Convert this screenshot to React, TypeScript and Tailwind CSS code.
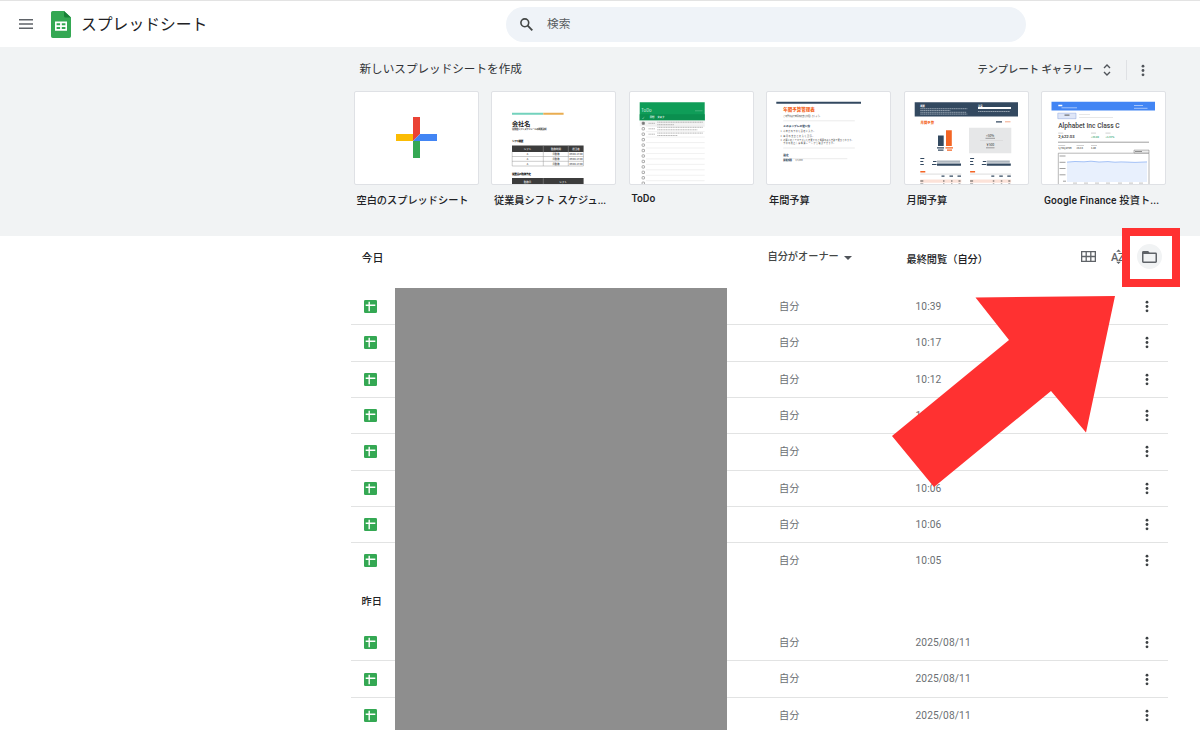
import type { ReactNode } from "react";

const DOC_ROWS_TODAY = ["10:39", "10:17", "10:12", "10:11", "10:07", "10:06", "10:06", "10:05"];
const DOC_ROWS_YESTERDAY = ["2025/08/11", "2025/08/11", "2025/08/11"];

function MoreIcon({ className }: { className?: string }) {
  return (
    <svg viewBox="0 0 4 14" className={className} fill="currentColor">
      <circle cx="2" cy="2.3" r="1.5" />
      <circle cx="2" cy="7" r="1.5" />
      <circle cx="2" cy="11.7" r="1.5" />
    </svg>
  );
}

function SheetsLogo() {
  return (
    <svg viewBox="0 0 20 27" className="h-[27px] w-5">
      <path d="M1.800 0H13l7 6.600v18.600a1.800 1.800 0 0 1-1.800 1.800H1.800A1.800 1.800 0 0 1 0 25.200V1.800A1.800 1.800 0 0 1 1.800 0z" fill="#34a853" />
      <path d="M13 0l7 6.600h-5.400A1.600 1.600 0 0 1 13 5z" fill="#188038" />
      <path d="M4 10.500h12v9.300H4zM5.600 12.200v2h3.500v-2zM10.800 12.200v2h3.600v-2zM5.600 16v2.100h3.500V16zM10.800 16v2.100h3.600V16z" fill="#fff" fillRule="evenodd" />
    </svg>
  );
}

function SheetIcon() {
  return (
    <svg viewBox="0 0 13 13" className="size-[13px]">
      <rect width="13" height="13" rx="1.3" fill="#34a853" />
      <path d="M4.500 1.800h1.400v2.800h5.400V6H5.900v5.200H4.500V6H1.700V4.600h2.800z" fill="#fff" />
    </svg>
  );
}

function BlankThumb() {
  return (
    <svg viewBox="0 0 41 41" className="size-[41px]">
      <path d="M17 0h7v17l-7 7z" fill="#ea4335" />
      <path d="M0 17h17v7H0z" fill="#fbbc04" />
      <path d="M17 24h7v17h-7z" fill="#34a853" />
      <path d="M24 17h17v7H17z" fill="#4285f4" />
    </svg>
  );
}

function Thumb({ children }: { children: ReactNode }) {
  return (
    <svg viewBox="1 0.5 123 91.5" className="h-full w-full" fontFamily="'Noto Sans CJK JP', sans-serif">
      {children}
    </svg>
  );
}

function ShiftThumb() {
  return (
    <Thumb>
      <path d="M21 21.200h31.300v2H21z" fill="#73d2bd" />
      <path d="M52.300 21.200h20.300v2H52.300z" fill="#e9ad51" />
      <text x="21" y="34.600" fontSize="6.100" fontWeight="700" fill="#222">会社名</text>
      <text x="21" y="38.300" fontSize="2.300" fontWeight="700" fill="#444" textLength="34.500">従業員シフト スケジュールの概要説明</text>
      <text x="21" y="50.600" fontSize="2.700" fontWeight="900" fill="#111" textLength="11.500">シフト概要</text>
      <path d="M21 54h71.600v6.400H21zM21 86.600h71.600V93H21z" fill="#3c3c3c" />
      <path d="M21.200 60v14.500h71.200V60M21 65h71.600M21 69.800h71.600M52.300 54v20.500M77.300 54v20.500M52.300 86.600V93" fill="none" stroke="#9a9a9a" strokeWidth=".5" />
      <g fontSize="2.500" fontWeight="700" textAnchor="middle" fill="#ddd">
        <text x="36.500" y="58.200">シフト</text>
        <text x="65" y="58.200">勤務時間</text>
        <text x="85" y="58.200">担当者</text>
        <text x="36.500" y="91">勤務日</text>
        <text x="72" y="91">シフト</text>
      </g>
      <g fontSize="2.300" fontWeight="700" textAnchor="middle" fill="#555">
        {[63.4, 68.2, 73].map((y) => (
          <g key={y}>
            <text x="36.500" y={y}>A</text>
            <text x="65" y={y}>日勤務</text>
            <text x="85" y={y}>09:00-17:00</text>
          </g>
        ))}
      </g>
      <text x="21" y="83.300" fontSize="2.700" fontWeight="900" fill="#111" textLength="19">従業員の勤務予定</text>
    </Thumb>
  );
}

function TodoThumb() {
  return (
    <Thumb>
      <path d="M10.700 10.700h65V29h-65z" fill="#0f9d58" />
      <path d="M10.700 22.700h65V29h-65z" fill="#0b8f4f" />
      <text x="12.300" y="20.300" fontSize="4.300" fill="#d5f2e1">ToDo</text>
      <path d="M66 19.300h7.500" stroke="#5dbd8c" strokeWidth=".7" />
      <text x="13.200" y="27" fontSize="3" fill="#fff">✓</text>
      <text x="20.700" y="26.900" fontSize="2.400" fontWeight="700" fill="#fff">日付</text>
      <text x="28.200" y="26.900" fontSize="2.400" fontWeight="700" fill="#fff">タスク</text>
      <path d="M10.700 29h65v5.700h-65z" fill="#f3f3f3" />
      {Array.from({ length: 12 }, (_, i) => (
        <g key={i} transform={`translate(0 ${i * 5.45})`}>
          <rect x="13.100" y="30.600" width="2.400" height="2.400" rx=".5" fill={i === 0 ? "#777" : "#fff"} stroke="#888" strokeWidth=".7" />
          <path d="M17 34.700h58.700" stroke="#e2e2e2" strokeWidth=".5" />
        </g>
      ))}
      <g stroke="#888" strokeWidth=".9" strokeDasharray="1.300 .4" opacity=".65">
        <path d="M19.500 31.800h6.500M19.500 37.300h6.500M19.500 42.700h6.500" />
        <path d="M28.300 30.700H74M28.300 33.200h17M28.300 35.800H74M28.300 38.300h40M28.300 41.600H74M28.300 44h20" />
      </g>
    </Thumb>
  );
}

function AnnualThumb() {
  return (
    <Thumb>
      <path d="M10.300 10.300H95v2H10.300z" fill="#334960" />
      <text x="17.300" y="19.800" fontSize="4.500" fontWeight="900" fill="#f46524">年間予算管理表</text>
      <text x="17.300" y="25" fontSize="2.100" fill="#444" textLength="38">この予算表で年間の収支を管理しましょう。</text>
      <path d="M17.300 29.300h71.500M17.300 56.500h71.500M17.300 67.200h64" stroke="#ddd" strokeWidth=".6" />
      <text x="17.300" y="35.800" fontSize="2.700" fontWeight="900" fill="#334960" textLength="27">このテンプレの使い方</text>
      <g fontSize="2" fill="#444">
        <text x="14.500" y="40.600">1.</text>
        <text x="17.300" y="40.600" textLength="32">今年度の予算を設定に入力。</text>
        <text x="14.500" y="45.200">2.</text>
        <text x="17.300" y="45.200" textLength="31">毎月の支出と収入を記録。</text>
        <text x="14.500" y="49.700">3.</text>
        <text x="17.300" y="49.500" textLength="70">必要に応じてカテゴリを変更すると概要の表も自動で更新されます。</text>
        <text x="17.300" y="52" textLength="52">予算の見直しは概要シートから確認できます。</text>
      </g>
      <text x="17.300" y="64.400" fontSize="2.600" fontWeight="900" fill="#334960">設定</text>
      <text x="17.300" y="69.400" fontSize="2.200" fontWeight="900" fill="#334960">開始残高</text>
      <text x="29" y="69.400" fontSize="2.200" fill="#555">￥5,000</text>
    </Thumb>
  );
}

function MonthlyThumb() {
  return (
    <Thumb>
      <path d="M10.700 10.700H114V25H10.700z" fill="#334960" />
      <g fontSize="2.300" fontWeight="700" fill="#fff">
        <text x="16.300" y="15">概要</text>
        <text x="74" y="15">注意</text>
      </g>
      <path d="M16.300 17.200h47M16.300 19h30M16.300 20.800h46M16.300 22.600h47M74 20h32" stroke="#b8c2cc" strokeWidth=".7" strokeDasharray="1.500 .35" />
      <path d="M74 15.600h33v1.900H74z" fill="#fff" />
      <text x="16.600" y="32.300" fontSize="3.400" fontWeight="900" fill="#f46524">月間予算</text>
      <path d="M92 30.300h6" stroke="#334960" strokeWidth="1.300" />
      <path d="M101 30.300h5.500" stroke="#f3a98a" strokeWidth="1" />
      <path d="M34 44h5.700v10.400H34z" fill="#334960" />
      <path d="M42 38.700h5.800v15.700H42z" fill="#f46524" />
      <path d="M33 56.300h7M34 58.600h5.500" stroke="#334960" strokeWidth="1.300" />
      <path d="M41.500 56.300h7.500M43 58.600h5" stroke="#f46524" strokeWidth="1.300" />
      <path d="M65 36.300h42.300v25.500H65z" fill="#e6e7e8" />
      <path d="M76 49h23" stroke="#ccc" strokeWidth=".4" />
      <g fontSize="3.100" textAnchor="middle" fill="#333">
        <text x="86" y="45">+50%</text>
        <text x="86" y="54">￥500</text>
      </g>
      <path d="M81.500 46.800h9.500M82 56.300h8.500" stroke="#888" strokeWidth=".8" />
      {[0, 49.8].map((dx) => (
        <g key={dx} transform={`translate(${dx} 0)`}>
          <path d="M16.300 67h4M16.300 70h3M16.300 73h3.500M29 70h3.500M28 73h4.500" stroke="#334960" strokeWidth="1.100" />
          <path d="M33 69h23v2.200H33z" fill="#aeb6be" />
          <path d="M33 72h24v2.300H33z" fill="#334960" />
          <path d="M16.300 80.300h5" stroke="#f46524" strokeWidth="1.500" />
          <path d="M16.300 82.600h41" stroke="#aaa" strokeWidth=".4" />
          <path d="M37.500 84.700h3M45.500 84.700h3.500M53.500 84.700h3.500" stroke="#334960" strokeWidth="1.300" />
          <path d="M16.300 88h41v3.300h-41z" fill="#fce2d8" />
          <path d="M16.300 89.500h3M39 89.500h1.500M47 89.500h1.500M54.500 89.500h2M16.300 92.600h3M39 92.600h1.500M47 92.600h1.500M54.500 92.600h2" stroke="#555" strokeWidth="1" />
        </g>
      ))}
    </Thumb>
  );
}

function FinanceThumb() {
  return (
    <Thumb>
      <path d="M10.500 10.300H114V19H10.500z" fill="#4285f4" />
      <path d="M17.300 14h4" stroke="#fff" strokeWidth="1.500" />
      <path d="M20.500 16.300H36M93 14h9M93 16.800h13.500" stroke="#a4c4fa" strokeWidth="1" />
      <path d="M16.800 21.700H35v5.500H16.800z" fill="#dfe6f7" stroke="#8ba5dc" strokeWidth=".5" />
      <path d="M23.500 23.600h5" stroke="#555" strokeWidth="1" />
      <path d="M38 23h11M38 26h34" stroke="#ddd" strokeWidth=".7" />
      <text x="17.200" y="36.500" fontSize="6.800" fontWeight="500" fill="#444" fontFamily="Roboto, sans-serif" textLength="61.500" lengthAdjust="spacingAndGlyphs">Alphabet Inc Class C</text>
      <text x="17.200" y="46.900" fontSize="4.200" fontWeight="500" fill="#222" fontFamily="Roboto, sans-serif">2,622.03</text>
      <path d="M17.200 41.600h5M50 41.600h5M64.500 41.600h5" stroke="#bbb" strokeWidth=".7" />
      <g fontSize="2.400" fontWeight="700" fill="#34a874">
        <text x="50" y="46.500">+34.90</text>
        <text x="64.500" y="46.500">+1.35%</text>
      </g>
      <path d="M17 50.700h91" stroke="#777" strokeWidth=".7" />
      <path d="M17.200 54h7M35.500 54h7.500M50 54h6" stroke="#bbb" strokeWidth=".7" />
      <g fontSize="2.400" fontWeight="700" fill="#555">
        <text x="17.200" y="57.700">1,740,675M</text>
        <text x="35.500" y="57.700">28.14</text>
        <text x="50" y="57.700">1.08</text>
      </g>
      <path d="M17.300 93V61.700H108V93" fill="#fff" stroke="#888" strokeWidth=".6" />
      <path d="M93 58.600h15v2.900H93z" fill="#eee" stroke="#777" strokeWidth=".5" />
      <path d="M94 60h7" stroke="#666" strokeWidth=".7" />
      <path d="M26 70.600l8-.6 9 .3 7-.6 8 .8 9-.4 7 .6 6-.3 7 .2 7 .3 12-.5V90.500H26z" fill="#e8f0fd" />
      <path d="M26 70.600l8-.6 9 .3 7-.6 8 .8 9-.4 7 .6 6-.3 7 .2 7 .3 12-.5" fill="none" stroke="#6d9cf0" strokeWidth=".6" />
      <path d="M18.500 64.500h6M18.500 70.800h6M18.500 77h6M18.500 83.300h6M22 89.700h3" stroke="#777" strokeWidth=".7" />
      <path d="M32 91.600h4M43 91.600h4M54 91.600h4M65 91.600h4M77 91.600h4M88 91.600h4M98 91.600h4" stroke="#999" strokeWidth=".6" />
    </Thumb>
  );
}

const TEMPLATES = [
  { label: "空白のスプレッドシート", thumb: <BlankThumb /> },
  { label: "従業員シフト スケジュ...", thumb: <ShiftThumb /> },
  { label: "ToDo", thumb: <TodoThumb />, latin: true },
  { label: "年間予算", thumb: <AnnualThumb /> },
  { label: "月間予算", thumb: <MonthlyThumb /> },
  { label: "Google Finance 投資ト...", thumb: <FinanceThumb />, wide: true },
];

function DocRow({ date, last }: { date: string; last?: boolean }) {
  return (
    <div
      className={`flex h-[36.33px] items-center border-b pl-[13px] text-[10.2px] text-[#6b6f73] ${
        last ? "border-transparent" : "border-[#e2e3e3]"
      }`}
    >
      <SheetIcon />
      <div className="ml-[402px] w-[136.5px]">自分</div>
      <div className="flex-1 tracking-[0.1px]">{date}</div>
      <MoreIcon className="mr-[19.5px] h-[13px] w-[4px] text-[#3c4043]" />
    </div>
  );
}

export default function App() {
  return (
    <div className="relative h-[730px] w-[1200px] overflow-hidden bg-white font-[Roboto,'Noto_Sans_CJK_JP',sans-serif] text-[#202124]">
      {/* Top bar */}
      <header className="flex h-[47px] items-center border-t border-[#e3e3e3]">
        <svg viewBox="0 0 14 10" className="ml-[19px] h-[10px] w-[14px]" fill="#5f6368">
          <path d="M0 0h14v1.600H0zM0 4.200h14v1.600H0zM0 8.400h14V10H0z" />
        </svg>
        <div className="ml-[18px]">
          <SheetsLogo />
        </div>
        <h1 className="ml-[10px] w-[425px] pt-[2px] text-[15.8px] leading-6">スプレッドシート</h1>
        <div className="flex h-[35px] w-[520px] items-center rounded-full bg-[#eff3f8] pl-[13.5px]">
          <svg viewBox="0 0 13 13" className="size-[13px]" fill="none" stroke="#444746" strokeWidth="1.600">
            <circle cx="4.800" cy="4.800" r="3.900" />
            <path d="M7.700 7.700l4.600 4.600" strokeWidth="1.900" />
          </svg>
          <span className="ml-[14.5px] pt-[2px] text-[11.7px] text-[#5a5e62]">検索</span>
        </div>
      </header>

      {/* Templates */}
      <section className="h-[189px] bg-[#f1f3f4] pl-[353.5px]">
        <div className="flex h-[44px] items-center pt-[2px]">
          <h2 className="ml-[6px] w-[618px] text-[11.6px] text-[#303236]">新しいスプレッドシートを作成</h2>
          <span className="w-[125.5px] text-[10.3px] font-medium text-[#3c4043]">テンプレート ギャラリー</span>
          <svg viewBox="0 0 8 12" className="h-[12px] w-[8px]" fill="none" stroke="#50545a" strokeWidth="1.400">
            <path d="M1 4l3-3 3 3M1 8l3 3 3-3" />
          </svg>
          <div className="ml-[15px] h-[20px] w-px bg-[#dfe1e4]" />
          <MoreIcon className="ml-[14px] h-[13px] w-[4px] text-[#50545a]" />
        </div>
        <div className="flex gap-[12.5px]">
          {TEMPLATES.map((t) => (
            <div key={t.label} className="w-[125px]">
              <div className="flex h-[93.5px] items-center justify-center overflow-hidden rounded-[2px] border border-[#dfe1e5] bg-white">
                {t.thumb}
              </div>
              <div
                className={`ml-[3px] text-[10.2px] leading-[16px] font-medium whitespace-nowrap ${
                  t.latin ? "mt-[6px]" : "mt-[8.5px]"
                } ${t.wide ? "tracking-[0.14px]" : ""}`}
              >
                {t.label}
              </div>
            </div>
          ))}
        </div>
      </section>

      {/* Document list */}
      <main className="ml-[351px] w-[817px]">
        <div className="flex h-[53px] items-start">
          <h3 className="ml-[10.5px] w-[406px] pt-[15px] text-[11px] leading-4 font-medium">今日</h3>
          <button className="flex w-[139px] items-center pt-[13px] text-[10.2px] leading-4 font-medium text-[#444746]">
            自分がオーナー
            <span className="mt-[1px] ml-[5px] border-x-4 border-t-4 border-x-transparent border-t-[#50545a]" />
          </button>
          <span className="w-[174px] pt-[16px] text-[10.2px] leading-4 font-medium">最終閲覧（自分）</span>
          <svg viewBox="0 0 15 11" className="mt-[15px] h-[11px] w-[15px]" fill="none" stroke="#5f6368" strokeWidth="1.300">
            <path d="M.65.65h13.700v9.700H.65zM5.200.65v9.700M9.800.65v9.700M.65 5.500h13.700" />
          </svg>
          <svg viewBox="0 0 16 16" className="mt-[13px] ml-[14.5px] size-4" fill="#5f6368">
            <text x="1" y="12" fontSize="11" fontWeight="500" fontFamily="Roboto, sans-serif">A</text>
            <text x="8" y="12" fontSize="11" fontWeight="500" fontFamily="Roboto, sans-serif">Z</text>
            <path d="M6.200 2.800L8.500.5l2.300 2.300zM6.200 12.700l2.300 2.300 2.300-2.300z" />
          </svg>
        </div>
        {DOC_ROWS_TODAY.map((date, i) => (
          <DocRow key={i} date={date} last={i === DOC_ROWS_TODAY.length - 1} />
        ))}
        <h3 className="flex h-[45.5px] items-center pb-[2px] pl-[10.5px] text-[10.2px] font-medium">昨日</h3>
        {DOC_ROWS_YESTERDAY.map((date, i) => (
          <DocRow key={i} date={date} />
        ))}
      </main>

      {/* Redacted file names */}
      <div className="absolute top-[288px] left-[394.5px] h-[442px] w-[332.5px] bg-[#8e8e8e]" />

      {/* Callout on the folder button */}
      <div className="absolute top-[228px] left-[1122px] flex h-[59px] w-[58px] justify-center border-8 border-[#ff3131] bg-white pt-[8px] pr-[3px]">
        <div className="flex size-[25px] items-center justify-center rounded-full bg-[#f1f3f4]">
          <svg viewBox="0 0 15 12" className="h-[12px] w-[15px]">
            <path d="M1.400 0h4.700l1.500 1.500h6a1.400 1.400 0 0 1 1.400 1.400v7.700a1.400 1.400 0 0 1-1.400 1.400H1.400A1.400 1.400 0 0 1 0 10.600V1.400A1.400 1.400 0 0 1 1.400 0zM1.500 3v7.500h12V3z" fill="#5f6368" fillRule="evenodd" />
          </svg>
        </div>
      </div>
      <svg viewBox="0 0 224 192" className="absolute top-[296px] left-[892px] h-[192px] w-[224px]">
        <path d="M83.500 1.500L223 0l-29 136.500L159 95 42 191 0 140l117-96z" fill="#ff3131" />
      </svg>
    </div>
  );
}
